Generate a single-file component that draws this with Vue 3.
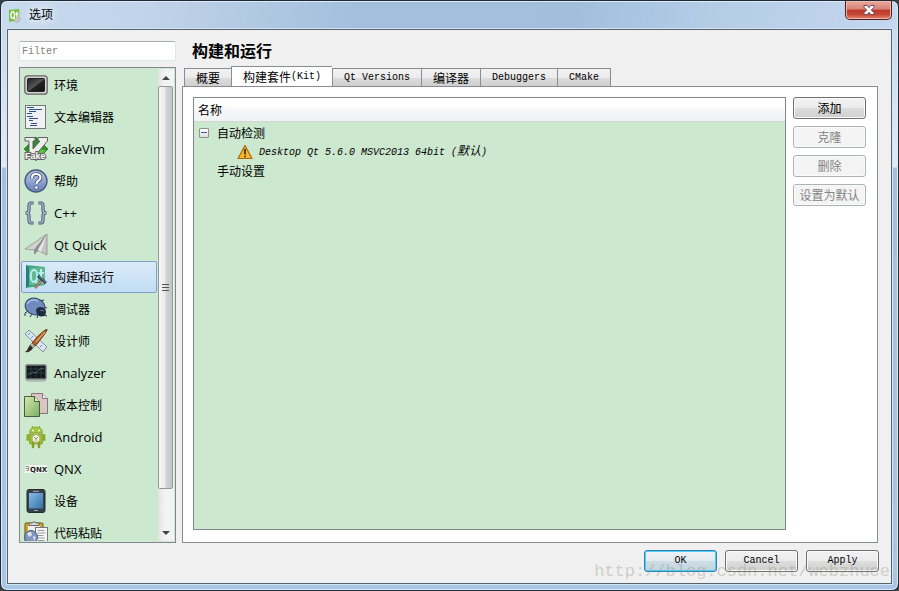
<template>
  <div class="window" role="dialog" aria-labelledby="window-title">
    <header class="titlebar">
      <svg class="app-icon" viewBox="0 0 16 16" aria-hidden="true">
        <path d="M1 2 12 1v12L1 15z" fill="#7ac143" />
        <ellipse cx="5" cy="7.5" rx="2" ry="3.5" fill="none" stroke="#fff" stroke-width="1.4" />
        <path d="M6 10l1.5 2M9.500 4v6q0 1 1 1M8 6.500h3" fill="none" stroke="#fff" stroke-width="1.3" />
        <path d="M15 5 9 11" stroke="#ccc" stroke-width="1" />
        <ellipse cx="10" cy="12.5" rx="3.5" ry="2.5" transform="rotate(-35 10 12.5)" fill="#c9c9c5" stroke="#999" stroke-width=".4" />
      </svg>
      <span id="window-title" class="window-title">选项</span>
      <button class="close" aria-label="关闭">
        <svg viewBox="0 0 12 10" aria-hidden="true">
          <path d="M1 .5h3.2L6 2.7 7.800.5H11v1.700L8.300 5 11 7.800v1.700H7.800L6 7.300 4.200 9.500H1V7.800L3.700 5 1 2.200z" fill="#fff" stroke="#5b4654" stroke-width=".9" />
        </svg>
      </button>
    </header>

    <main class="client">
      <div class="content">
        <aside class="sidebar">
          <input v-model="filter" class="filter" type="text" placeholder="Filter" aria-label="Filter" />
          <div class="list">
            <ul class="categories">
              <li v-for="c in visibleCategories" :key="c.name">
                <button
                  class="category"
                  :class="{ selected: c.name === selected }"
                  @click="selected = c.name"
                >
                  <svg class="category-icon" viewBox="0 0 24 24" aria-hidden="true" v-html="c.icon"></svg>
                  <span :class="c.latin ? 'latin' : 'han'">{{ c.name }}</span>
                </button>
              </li>
            </ul>
            <div class="scrollbar">
              <button class="arrow" aria-label="向上滚动">
                <svg viewBox="0 0 8 4" aria-hidden="true"><path d="M4 0l4 4H0z" fill="#444" /></svg>
              </button>
              <div class="track">
                <div class="thumb"><i></i><i></i><i></i></div>
              </div>
              <button class="arrow" aria-label="向下滚动">
                <svg viewBox="0 0 8 4" aria-hidden="true"><path d="M0 0h8L4 4z" fill="#444" /></svg>
              </button>
            </div>
          </div>
        </aside>

        <section class="page">
          <h1>构建和运行</h1>
          <div class="tabs" role="tablist">
            <button
              v-for="(t, i) in tabs"
              :key="i"
              class="tab"
              :class="{ active: i === activeTab }"
              role="tab"
              :aria-selected="i === activeTab"
              @click="activeTab = i"
            ><span class="han">{{ t.han }}</span><span>{{ t.latin }}</span></button>
          </div>
          <div class="panel" role="tabpanel">
            <div class="tree">
              <div class="tree-header">名称</div>
              <div class="tree-row">
                <button class="expander" :aria-expanded="expanded" aria-label="自动检测" @click="expanded = !expanded"></button>
                <span>自动检测</span>
              </div>
              <div v-if="expanded" class="tree-row kit">
                <svg class="warning" viewBox="0 0 16 16" aria-hidden="true">
                  <path d="M8 1.5 15 14.500H1z" fill="#f8b62c" stroke="#a8680d" stroke-width="1.2" stroke-linejoin="round" />
                  <path d="M8 5v5.500M8 11.800v1.500" stroke="#2d2410" stroke-width="1.6" />
                </svg>
                <em>Desktop Qt 5.6.0 MSVC2013 64bit (<span class="han">默认</span>)</em>
              </div>
              <div class="tree-row manual">手动设置</div>
            </div>
            <div class="actions">
              <button class="push han">添加</button>
              <button class="push han" disabled>克隆</button>
              <button class="push han" disabled>删除</button>
              <button class="push han" disabled>设置为默认</button>
            </div>
          </div>
        </section>
      </div>

      <footer class="footer">
        <button class="push default">OK</button>
        <button class="push">Cancel</button>
        <button class="push">Apply</button>
      </footer>
    </main>
    <div class="watermark">http://blog.csdn.net/webzhuce</div>
  </div>
</template>

<script setup>
import { computed, ref } from "vue";

const filter = ref("");
const selected = ref("构建和运行");
const activeTab = ref(1);
const expanded = ref(true);

const tabs = [
  { han: "概要", latin: "" },
  { han: "构建套件", latin: "(Kit)" },
  { han: "", latin: "Qt Versions" },
  { han: "编译器", latin: "" },
  { han: "", latin: "Debuggers" },
  { han: "", latin: "CMake" },
];

const categories = [
  {
    name: "环境",
    icon: `<defs><linearGradient id="env" x2="1" y2="1"><stop stop-color="#222"/><stop offset=".5" stop-color="#555"/><stop offset=".55" stop-color="#222"/><stop offset="1" stop-color="#111"/></linearGradient></defs>
      <rect x=".8" y="2.8" width="22.4" height="18.4" rx="3" fill="#d5d1d5" stroke="#666" stroke-width="1.3"/>
      <rect x="3.5" y="5.5" width="17" height="13" rx="1" fill="url(#env)" stroke="#222"/>`,
  },
  {
    name: "文本编辑器",
    icon: `<rect x="1.5" y=".5" width="20" height="23" fill="#edf1f5" stroke="#777"/>
      <path d="M3 2.500h7M5 4.500h13M5 6.500h7M3 8.500h5M3 11.500h6M5 13.500h9M5 15.500h4M7 18.500h6M6 20.500h7" stroke="#355288"/>`,
  },
  {
    name: "FakeVim",
    latin: true,
    icon: `<path d="M12 0 24 12 12 24 0 12z" fill="#2f8f2c" stroke="#1d5a1d" stroke-width=".6"/><path d="M12 12 22 13 12 24 5 17z" fill="#5cc53f"/>
      <path d="M1 .5h10V4H9v8l7-8h-2V.5h9.500V4L10 20H5V4H1z" fill="#eceeec" stroke="#555" stroke-width=".9"/>
      <text x="1" y="22" font-family="Liberation Sans" font-size="9" font-weight="bold" fill="#fff" stroke="#666" stroke-width="2" paint-order="stroke">Fake</text>`,
  },
  {
    name: "帮助",
    icon: `<defs><linearGradient id="help" x2="0" y2="1"><stop stop-color="#b9c8e6"/><stop offset=".5" stop-color="#8fa5d1"/><stop offset="1" stop-color="#6481b8"/></linearGradient></defs>
      <circle cx="12" cy="12" r="11" fill="url(#help)" stroke="#46577c" stroke-width="1.3"/>
      <path d="M8 9q0-4 4-4 4.500 0 4.500 3.700 0 2-2.500 3.300-1.500 1-1.500 3" fill="none" stroke="#34425e" stroke-width="3.6"/>
      <path d="M8 9q0-4 4-4 4.500 0 4.500 3.700 0 2-2.500 3.300-1.500 1-1.500 3" fill="none" stroke="#fff" stroke-width="2.2"/>
      <circle cx="12.4" cy="18.5" r="1.8" fill="#fff" stroke="#34425e" stroke-width=".7"/>`,
  },
  {
    name: "C++",
    latin: true,
    icon: `<g fill="none" stroke="#465574" stroke-width="3.2"><path d="M9.500 2H7Q5 2 5 5v4q0 3-3.500 3Q5 12 5 15v4q0 3 2 3h2.500M14.500 2H17q2 0 2 3v4q0 3 3.500 3Q19 12 19 15v4q0 3-2 3h-2.500"/></g>
      <g fill="none" stroke="#b7c7df" stroke-width="1.2"><path d="M9 2H7Q5 2 5 5v4q0 3-3 3Q5 12 5 15v4q0 3 2 3h2M15 2h2q2 0 2 3v4q0 3 3 3Q19 12 19 15v4q0 3-2 3h-2"/></g>`,
  },
  {
    name: "Qt Quick",
    latin: true,
    icon: `<path d="M23 1 1 16l9 1z" fill="#d2d2d2" stroke="#888" stroke-width=".7"/><path d="M23 1 10 17v5l4-4z" fill="#8f8f8f"/>
      <path d="M23 1 13 17l10 5z" fill="#c4c4c4" stroke="#888" stroke-width=".7"/><path d="M23 1 14 17l3 2z" fill="#e6e6e6"/>`,
  },
  {
    name: "构建和运行",
    icon: `<path d="M2 0 21 2v18L2 23z" fill="#39a883"/><path d="M2 0l3 3v17l-3 3z" fill="#247f79"/><path d="M5 3l16-1v18L5 20z" fill="#65b792"/>
      <ellipse cx="10" cy="11" rx="3.2" ry="6" fill="none" stroke="#b8eef0" stroke-width="2"/><path d="M11 15l2 3M17 4v11q0 2 2 2M14.500 8H20" fill="none" stroke="#b8eef0" stroke-width="2"/>
      <path d="M18 15l-7 8" stroke="#6f5148" stroke-width="2.6"/><path d="M18 15l-7 8" stroke="#b89584" stroke-width="1.2"/><path d="M14 11l8 7" stroke="#26384c" stroke-width="2.8"/><path d="M15 11.500l7 6" stroke="#8295a4"/>`,
  },
  {
    name: "调试器",
    icon: `<path d="M4 14l-3 2v3M8 17l-2 3M16 4l4-1M20 10l3 1M20 18l3 1M14 18l-1 3" fill="none" stroke="#26324b"/>
      <ellipse cx="11" cy="9.5" rx="10" ry="8.3" transform="rotate(18 11 9.5)" fill="#6e8abf" stroke="#33415f"/>
      <path d="M3 7q4-6 11-3" fill="none" stroke="#9db2dc" stroke-width="2"/>
      <path d="M12 14q0-4 5-4 5 1 5 5 0 4-4 4.500-5 0-6-5.500z" fill="#202a41"/><path d="M16 13l4 1" stroke="#697696"/>`,
  },
  {
    name: "设计师",
    icon: `<path d="M1 5 5 1l18 17-4 5z" fill="#dce4ef" stroke="#8191a8"/><path d="M6 4 4 6M9 7 7 9M12 10l-2 2M15 13l-2 2M18 16l-2 2" stroke="#7889a5"/>
      <path d="M23 0q1 2-12 17l-3-3Q17 3 23 0z" fill="#ba6026" stroke="#552812" stroke-width=".9"/><path d="M21 3l-9 10" stroke="#e6a25e" stroke-width="1.2"/>
      <path d="M8 14l3 3-2 2-3-3z" fill="#b8b8ac" stroke="#555" stroke-width=".5"/><path d="M6 16l3 3q-3 5-8 4 3-2 3-4z" fill="#342c23"/>`,
  },
  {
    name: "Analyzer",
    latin: true,
    icon: `<rect x="2" y="4" width="20" height="14" rx="1" fill="#11171a" stroke="#777c7f" stroke-width="1.4"/>
      <path d="M7 5v12M12 5v12M17 5v12M3 8h18M3 12h18" stroke="#33494c" stroke-width=".7"/><path d="M4 14l5-3 3 1 4-4 4-1" fill="none" stroke="#4d7473" stroke-width=".8"/>
      <path d="M2 19l2 1h16l2-1" fill="none" stroke="#999"/>`,
  },
  {
    name: "版本控制",
    icon: `<path d="M7.500.5h11l5 5v15h-16z" fill="#dac5c5" stroke="#8c7777"/><path d="M18.500.5v5h5" fill="#f5e9e9" stroke="#8c7777"/>
      <defs><linearGradient id="vcs" x2="1" y2="1"><stop stop-color="#dbeab0"/><stop offset="1" stop-color="#78ad62"/></linearGradient></defs>
      <path d="M.5 3.500h10l5 5v15H.5z" fill="url(#vcs)" stroke="#45603b"/><path d="M10.500 3.500v5h5" fill="#e4f0ce" stroke="#45603b"/>`,
  },
  {
    name: "Android",
    latin: true,
    icon: `<path d="M8 1l2 3M16 1l-2 3" stroke="#789e1d"/><path d="M5.500 8q0-6 6.500-6t6.500 6z" fill="#a4c639" stroke="#76951f" stroke-width=".6"/>
      <circle cx="9" cy="5.5" r=".9" fill="#fff"/><circle cx="15" cy="5.5" r=".9" fill="#fff"/>
      <path d="M5.500 9h13v9q0 1-1 1h-11q-1 0-1-1z" fill="#9bbe2f" stroke="#718e1c" stroke-width=".6"/>
      <rect x="2.5" y="9" width="2.4" height="7" rx="1.2" fill="#8aaa29"/><rect x="19" y="9" width="2.4" height="7" rx="1.2" fill="#8aaa29"/>
      <path d="M9 18v4M15 18v4" stroke="#819f27" stroke-width="2.5" stroke-linecap="round"/><circle cx="12" cy="13.5" r="4" fill="#f2f2dc" stroke="#b0ab77"/><path d="M10 12l2 2 2-2M12 14v2" fill="none" stroke="#929a63"/>`,
  },
  {
    name: "QNX",
    latin: true,
    icon: `<path d="M1 8h22v8H1z" fill="#f4f6f4"/><path d="M1.500 9.500h3v2h-3M4.500 11v2.500h-2" fill="none" stroke="#777" stroke-width=".8"/>
      <text x="6" y="15" font-family="DejaVu Sans" font-size="7" font-weight="bold" fill="#222">QNX</text>`,
  },
  {
    name: "设备",
    icon: `<defs><linearGradient id="dev" x2="1" y2="1"><stop stop-color="#8cbce3"/><stop offset=".5" stop-color="#5d96c9"/><stop offset="1" stop-color="#396fa3"/></linearGradient></defs>
      <rect x="3" y=".5" width="18" height="23" rx="2" fill="#36404a" stroke="#252c32"/><rect x="5" y="4" width="14" height="15.5" fill="url(#dev)"/>
      <path d="M9 2.300h6M10 21.500h4" stroke="#9daab4"/>`,
  },
  {
    name: "代码粘贴",
    icon: `<rect x="1" y="2" width="18" height="22" rx="1" fill="#d4a72b" stroke="#6d5315"/><rect x="4" y="5" width="12" height="16" fill="#eee"/>
      <path d="M5 4.500V2h3q2-3 4 0h3v2.500z" fill="#d9d9d9" stroke="#666"/><rect x="11.5" y="6.5" width="12" height="17" fill="#f5f5f5" stroke="#777"/>
      <path d="M13.500 9.500h7M13.500 12h8M13.500 14.500h6M13.500 17h7M13.500 19.500h7" stroke="#999"/>
      <circle cx="7" cy="16" r="6.5" fill="#8195bd" stroke="#4c5d83"/><path d="M3 12l4-1 1 3-3 2zM9 15l3 1-2 4z" fill="#dfe5ef"/>`,
  },
];

const visibleCategories = computed(() =>
  categories.filter((c) => c.name.toLowerCase().includes(filter.value.toLowerCase()))
);
</script>

<style>
body {
  background: #3c4043;
}
</style>

<style scoped>
.window {
  position: relative;
  box-sizing: border-box;
  height: 100vh;
  min-height: 300px;
  padding: 0 6px 6px;
  display: flex;
  flex-direction: column;
  border: 1px solid #202a35;
  border-radius: 7px;
  box-shadow: inset 0 0 0 1px #dcebf7;
  background:
    linear-gradient(100deg, #c8daee 0, #c0d3e8 150px, #a3bfdd 350px, #a1bfdd 570px, #b4cce6 700px, #c4d7ee 100%) top / 100% 30px no-repeat,
    linear-gradient(#c4d7ec 0, #dfebf7 166px, #a4c0df 167px, #a9c6e4 100%);
  font-family: "Liberation Mono", "Noto Sans CJK SC", monospace;
  font-size: 10px;
  color: #000;
}

button,
input {
  font: inherit;
  color: inherit;
}

.han {
  font-family: "Noto Sans CJK SC", sans-serif;
  font-size: 12px;
}

.latin {
  font-family: "Open Sans", sans-serif;
  font-size: 13px;
}

.titlebar {
  flex: none;
  height: 28px;
  display: flex;
  align-items: center;
  gap: 6px;
  padding-left: 1px;
}

.app-icon {
  width: 15px;
  height: 15px;
}

.window-title {
  flex: 1;
  padding-bottom: 2px;
  font-family: "Noto Sans CJK SC", sans-serif;
  font-size: 12px;
  line-height: 16px;
  text-shadow: 0 0 8px #fff, 0 0 12px #fff;
}

.close {
  align-self: flex-start;
  width: 47px;
  height: 19px;
  padding: 0;
  display: flex;
  align-items: center;
  justify-content: center;
  border: 1px solid #541c20;
  border-top: 0;
  border-radius: 0 0 5px 5px;
  background: linear-gradient(#e9aaa0 0, #d98376 45%, #bd382c 50%, #c64736 75%, #e58b71 100%);
  box-shadow: inset 0 0 0 1px #eeb8ad;
}

.close svg {
  width: 12px;
  height: 10px;
}

.client {
  flex: 1;
  min-height: 0;
  padding: 11px 12px 11px 11px;
  display: flex;
  flex-direction: column;
  gap: 7px;
  border: 1px solid #56636f;
  box-shadow: 0 0 0 1px #d5e5f3;
  background: #f0f0f0;
}

.content {
  flex: 1;
  min-height: 0;
  padding-right: 1px;
  display: flex;
  gap: 6px;
}

.sidebar {
  flex: none;
  width: 157px;
  display: flex;
  flex-direction: column;
  gap: 6px;
}

.filter {
  box-sizing: border-box;
  width: 100%;
  height: 20px;
  padding: 0 2px;
  border: 1px solid #e0e4ec;
  border-top-color: #abadb3;
  border-radius: 2px;
  background: #fff;
}

.filter::placeholder {
  color: #808080;
}

.list {
  flex: 1;
  min-height: 0;
  padding: 1px;
  display: flex;
  gap: 1px;
  border: 1px solid #828790;
  background: #cce8cf;
}

.categories {
  flex: 1;
  min-width: 0;
  margin: 0;
  padding: 0;
  overflow: hidden;
  list-style: none;
}

.category {
  box-sizing: border-box;
  width: 100%;
  height: 32px;
  padding: 0 2px;
  display: flex;
  align-items: center;
  gap: 6px;
  border: 1px solid transparent;
  border-radius: 2px;
  background: none;
  text-align: left;
  white-space: nowrap;
}

.category .han {
  padding-bottom: 2px;
}

.category.selected {
  border-color: #7da2ce;
  background: linear-gradient(#dcebf8, #c1dcf3);
}

.category-icon {
  flex: none;
  width: 24px;
  height: 24px;
}

.scrollbar {
  flex: none;
  width: 16px;
  display: flex;
  flex-direction: column;
  background: linear-gradient(90deg, #e3e3e3, #f2f2f2 40%, #f4f4f4);
}

.arrow {
  height: 17px;
  padding: 0;
  display: flex;
  align-items: center;
  justify-content: center;
  border: 0;
  background: none;
}

.arrow svg {
  width: 8px;
  height: 4px;
}

.track {
  flex: 1;
}

.thumb {
  box-sizing: border-box;
  height: 92%;
  display: flex;
  flex-direction: column;
  align-items: center;
  justify-content: center;
  gap: 2px;
  margin-right: 1px;
  border: 1px solid #979797;
  border-radius: 2px;
  background: linear-gradient(90deg, #f6f6f6 0, #ebebeb 45%, #d3d3d8 55%, #c3c3c9 100%);
}

.thumb i {
  width: 7px;
  height: 1px;
  background: #555;
}

.page {
  flex: 1;
  min-width: 0;
  display: flex;
  flex-direction: column;
}

h1 {
  margin: 0 0 7px 10px;
  font-family: "Noto Sans CJK SC", sans-serif;
  font-size: 16px;
  font-weight: bold;
  line-height: 18px;
}

.tabs {
  flex: none;
  height: 20px;
  padding-left: 2px;
  display: flex;
  align-items: flex-end;
}

.tab {
  box-sizing: border-box;
  height: 18px;
  padding: 0 11px;
  display: flex;
  align-items: center;
  border: 1px solid #898c95;
  border-width: 1px 0 0 1px;
  background: linear-gradient(#f2f2f2 0, #ebebeb 50%, #dbdbdb 55%, #cfcfcf 100%);
  line-height: 16px;
  white-space: nowrap;
}

.tab:last-child {
  border-right-width: 1px;
}

.tab.active {
  height: 21px;
  margin-bottom: -1px;
  background: #fff;
}

.panel {
  flex: 1;
  min-height: 0;
  padding: 10px 11px 12px 10px;
  display: flex;
  gap: 7px;
  border: 1px solid #898c95;
  background: #fff;
}

.tree {
  flex: 1;
  min-width: 0;
  border: 1px solid #828790;
  background: #cce8cf;
  font-family: "Noto Sans CJK SC", sans-serif;
  font-size: 12px;
}

.tree-header {
  height: 23px;
  margin-bottom: 1px;
  padding-left: 4px;
  border-bottom: 1px solid #d5d5d5;
  background: linear-gradient(#fff 0, #fff 40%, #f7f8fa 42%, #f1f2f4 100%);
  line-height: 24px;
}

.tree-row {
  height: 19px;
  display: flex;
  align-items: center;
  gap: 8px;
  padding-left: 5px;
  line-height: 18px;
  white-space: nowrap;
}

.tree-row.kit {
  padding-left: 43px;
  gap: 6px;
  font-family: "Liberation Mono", monospace;
  font-size: 10px;
}

.tree-row.manual {
  padding-left: 23px;
}

.expander {
  width: 10px;
  height: 10px;
  padding: 0;
  border: 1px solid #919191;
  border-radius: 1px;
  background:
    linear-gradient(#3f5c9e, #3f5c9e) center / 6px 1px no-repeat,
    linear-gradient(#fff, #ddd);
}

.warning {
  width: 16px;
  height: 16px;
}

.actions {
  flex: none;
  display: flex;
  flex-direction: column;
  gap: 7px;
}

.push {
  box-sizing: border-box;
  width: 73px;
  height: 22px;
  padding: 0;
  border: 1px solid #707070;
  border-radius: 3px;
  box-shadow: inset 0 0 0 1px #fafafa;
  background: linear-gradient(#f2f2f2 0, #ebebeb 50%, #dddddd 51%, #cfcfcf 100%);
  line-height: 20px;
  white-space: nowrap;
}

.push:disabled {
  border-color: #adb2b5;
  background: #f4f4f4;
  color: #838383;
}

.push.default {
  border-color: #3c7fb1;
  box-shadow: inset 0 0 0 1px #46d0f5;
  background: linear-gradient(#edf3f6 0, #e3eaef 50%, #cfdee6 51%, #c2d3dd 100%);
}

.footer {
  flex: none;
  display: flex;
  justify-content: flex-end;
  gap: 8px;
}

.watermark {
  position: absolute;
  right: 8px;
  bottom: 8px;
  font-family: "Liberation Mono", monospace;
  font-size: 17px;
  line-height: 20px;
  color: rgba(150, 150, 140, 0.4);
  pointer-events: none;
}
</style>
